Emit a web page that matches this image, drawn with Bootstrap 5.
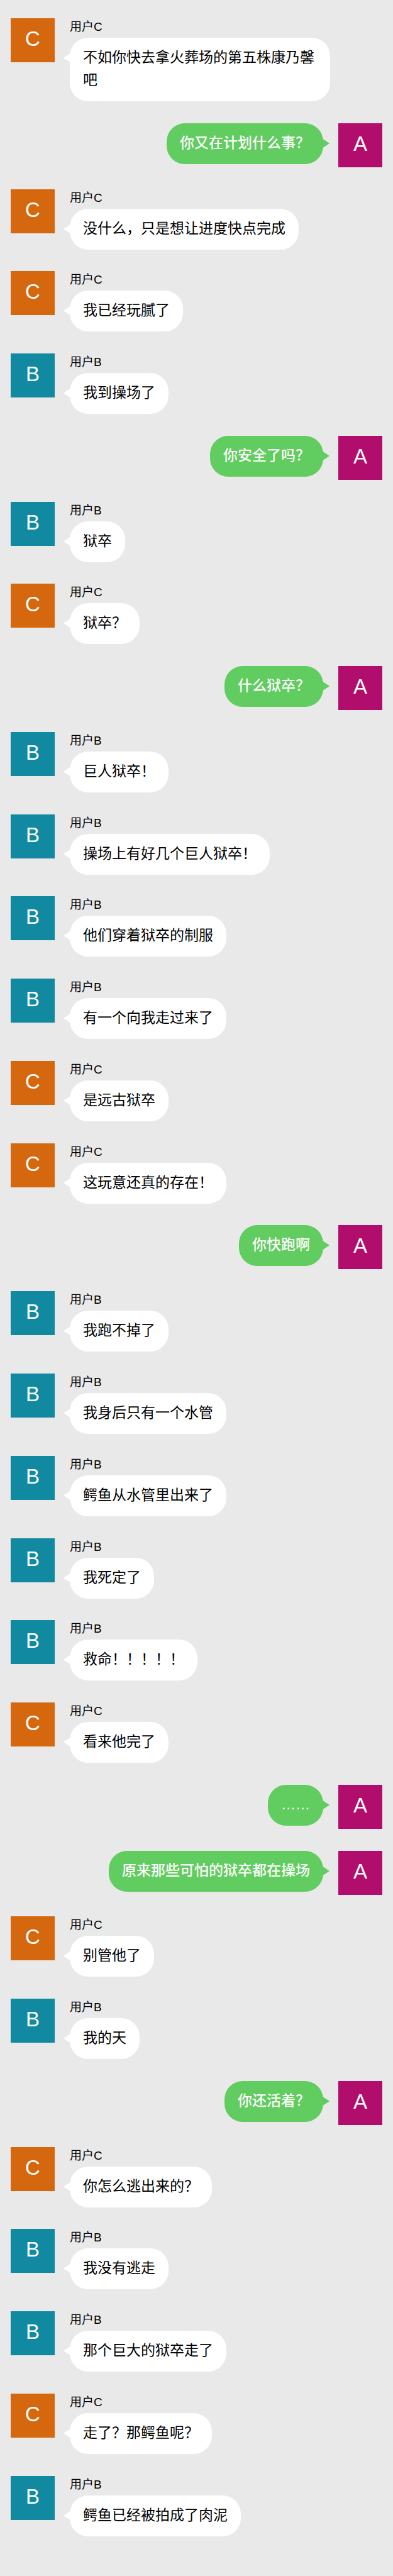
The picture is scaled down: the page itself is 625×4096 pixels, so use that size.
<!DOCTYPE html>
<html lang="zh-CN">
<head>
<meta charset="utf-8">
<meta name="viewport" content="width=device-width, initial-scale=1">
<title>聊天记录</title>
<link href="https://cdn.jsdelivr.net/npm/bootstrap@5.3.0/dist/css/bootstrap.min.css" rel="stylesheet">
<script src="https://cdn.jsdelivr.net/npm/bootstrap@5.3.0/dist/js/bootstrap.bundle.min.js"></script>
<style>
body { background: #e9e9e9; color: #000; font-family: "Liberation Sans", "Noto Sans CJK SC", sans-serif; }
.chat { padding: 29px 17px 63px; }
.msg { gap: 24px; }
.msg-in { padding-right: 83px; }
.msg-out { padding-left: 83px; }
.avatar { width: 70px; height: 70px; line-height: 65px; font-size: 33px; }
.user-a { background: #b10d6c; }
.user-b { background: #118aa1; }
.user-c { background: #d5680f; }
.sender { font-size: 19px; line-height: 27px; margin-bottom: 4px; }
.bubble { width: fit-content; padding: 13px 21px 16px; border-radius: 29px; background: #fff; font-size: 23px; line-height: 36px; }
.bubble::before { content: ""; position: absolute; top: 24px; left: -10px; border: solid transparent; border-width: 8px 12px 8px 0; border-right-color: #fff; }
.msg-out .bubble { background: #61cc5f; color: #fff; font-weight: 500; }
.msg-out .bubble::before { left: auto; right: -10px; border-width: 8px 0 8px 12px; border-left-color: #61cc5f; }
</style>
</head>
<body>
<main>
<ul class="chat list-unstyled mb-0 min-vh-100 d-flex flex-column justify-content-between">
<li class="msg msg-in d-flex align-items-start"><div class="avatar user-c flex-shrink-0 text-center text-white">C</div><div><div class="sender">用户C</div><div class="bubble position-relative">不如你快去拿火葬场的第五株康乃馨吧</div></div></li>
<li class="msg msg-out d-flex flex-row-reverse align-items-start"><div class="avatar user-a flex-shrink-0 text-center text-white">A</div><div class="bubble position-relative">你又在计划什么事？</div></li>
<li class="msg msg-in d-flex align-items-start"><div class="avatar user-c flex-shrink-0 text-center text-white">C</div><div><div class="sender">用户C</div><div class="bubble position-relative">没什么，只是想让进度快点完成</div></div></li>
<li class="msg msg-in d-flex align-items-start"><div class="avatar user-c flex-shrink-0 text-center text-white">C</div><div><div class="sender">用户C</div><div class="bubble position-relative">我已经玩腻了</div></div></li>
<li class="msg msg-in d-flex align-items-start"><div class="avatar user-b flex-shrink-0 text-center text-white">B</div><div><div class="sender">用户B</div><div class="bubble position-relative">我到操场了</div></div></li>
<li class="msg msg-out d-flex flex-row-reverse align-items-start"><div class="avatar user-a flex-shrink-0 text-center text-white">A</div><div class="bubble position-relative">你安全了吗？</div></li>
<li class="msg msg-in d-flex align-items-start"><div class="avatar user-b flex-shrink-0 text-center text-white">B</div><div><div class="sender">用户B</div><div class="bubble position-relative">狱卒</div></div></li>
<li class="msg msg-in d-flex align-items-start"><div class="avatar user-c flex-shrink-0 text-center text-white">C</div><div><div class="sender">用户C</div><div class="bubble position-relative">狱卒？</div></div></li>
<li class="msg msg-out d-flex flex-row-reverse align-items-start"><div class="avatar user-a flex-shrink-0 text-center text-white">A</div><div class="bubble position-relative">什么狱卒？</div></li>
<li class="msg msg-in d-flex align-items-start"><div class="avatar user-b flex-shrink-0 text-center text-white">B</div><div><div class="sender">用户B</div><div class="bubble position-relative">巨人狱卒！</div></div></li>
<li class="msg msg-in d-flex align-items-start"><div class="avatar user-b flex-shrink-0 text-center text-white">B</div><div><div class="sender">用户B</div><div class="bubble position-relative">操场上有好几个巨人狱卒！</div></div></li>
<li class="msg msg-in d-flex align-items-start"><div class="avatar user-b flex-shrink-0 text-center text-white">B</div><div><div class="sender">用户B</div><div class="bubble position-relative">他们穿着狱卒的制服</div></div></li>
<li class="msg msg-in d-flex align-items-start"><div class="avatar user-b flex-shrink-0 text-center text-white">B</div><div><div class="sender">用户B</div><div class="bubble position-relative">有一个向我走过来了</div></div></li>
<li class="msg msg-in d-flex align-items-start"><div class="avatar user-c flex-shrink-0 text-center text-white">C</div><div><div class="sender">用户C</div><div class="bubble position-relative">是远古狱卒</div></div></li>
<li class="msg msg-in d-flex align-items-start"><div class="avatar user-c flex-shrink-0 text-center text-white">C</div><div><div class="sender">用户C</div><div class="bubble position-relative">这玩意还真的存在！</div></div></li>
<li class="msg msg-out d-flex flex-row-reverse align-items-start"><div class="avatar user-a flex-shrink-0 text-center text-white">A</div><div class="bubble position-relative">你快跑啊</div></li>
<li class="msg msg-in d-flex align-items-start"><div class="avatar user-b flex-shrink-0 text-center text-white">B</div><div><div class="sender">用户B</div><div class="bubble position-relative">我跑不掉了</div></div></li>
<li class="msg msg-in d-flex align-items-start"><div class="avatar user-b flex-shrink-0 text-center text-white">B</div><div><div class="sender">用户B</div><div class="bubble position-relative">我身后只有一个水管</div></div></li>
<li class="msg msg-in d-flex align-items-start"><div class="avatar user-b flex-shrink-0 text-center text-white">B</div><div><div class="sender">用户B</div><div class="bubble position-relative">鳄鱼从水管里出来了</div></div></li>
<li class="msg msg-in d-flex align-items-start"><div class="avatar user-b flex-shrink-0 text-center text-white">B</div><div><div class="sender">用户B</div><div class="bubble position-relative">我死定了</div></div></li>
<li class="msg msg-in d-flex align-items-start"><div class="avatar user-b flex-shrink-0 text-center text-white">B</div><div><div class="sender">用户B</div><div class="bubble position-relative">救命！！！！！</div></div></li>
<li class="msg msg-in d-flex align-items-start"><div class="avatar user-c flex-shrink-0 text-center text-white">C</div><div><div class="sender">用户C</div><div class="bubble position-relative">看来他完了</div></div></li>
<li class="msg msg-out d-flex flex-row-reverse align-items-start"><div class="avatar user-a flex-shrink-0 text-center text-white">A</div><div class="bubble position-relative">……</div></li>
<li class="msg msg-out d-flex flex-row-reverse align-items-start"><div class="avatar user-a flex-shrink-0 text-center text-white">A</div><div class="bubble position-relative">原来那些可怕的狱卒都在操场</div></li>
<li class="msg msg-in d-flex align-items-start"><div class="avatar user-c flex-shrink-0 text-center text-white">C</div><div><div class="sender">用户C</div><div class="bubble position-relative">别管他了</div></div></li>
<li class="msg msg-in d-flex align-items-start"><div class="avatar user-b flex-shrink-0 text-center text-white">B</div><div><div class="sender">用户B</div><div class="bubble position-relative">我的天</div></div></li>
<li class="msg msg-out d-flex flex-row-reverse align-items-start"><div class="avatar user-a flex-shrink-0 text-center text-white">A</div><div class="bubble position-relative">你还活着？</div></li>
<li class="msg msg-in d-flex align-items-start"><div class="avatar user-c flex-shrink-0 text-center text-white">C</div><div><div class="sender">用户C</div><div class="bubble position-relative">你怎么逃出来的？</div></div></li>
<li class="msg msg-in d-flex align-items-start"><div class="avatar user-b flex-shrink-0 text-center text-white">B</div><div><div class="sender">用户B</div><div class="bubble position-relative">我没有逃走</div></div></li>
<li class="msg msg-in d-flex align-items-start"><div class="avatar user-b flex-shrink-0 text-center text-white">B</div><div><div class="sender">用户B</div><div class="bubble position-relative">那个巨大的狱卒走了</div></div></li>
<li class="msg msg-in d-flex align-items-start"><div class="avatar user-c flex-shrink-0 text-center text-white">C</div><div><div class="sender">用户C</div><div class="bubble position-relative">走了？那鳄鱼呢？</div></div></li>
<li class="msg msg-in d-flex align-items-start"><div class="avatar user-b flex-shrink-0 text-center text-white">B</div><div><div class="sender">用户B</div><div class="bubble position-relative">鳄鱼已经被拍成了肉泥</div></div></li>
</ul>
</main>
</body>
</html>
